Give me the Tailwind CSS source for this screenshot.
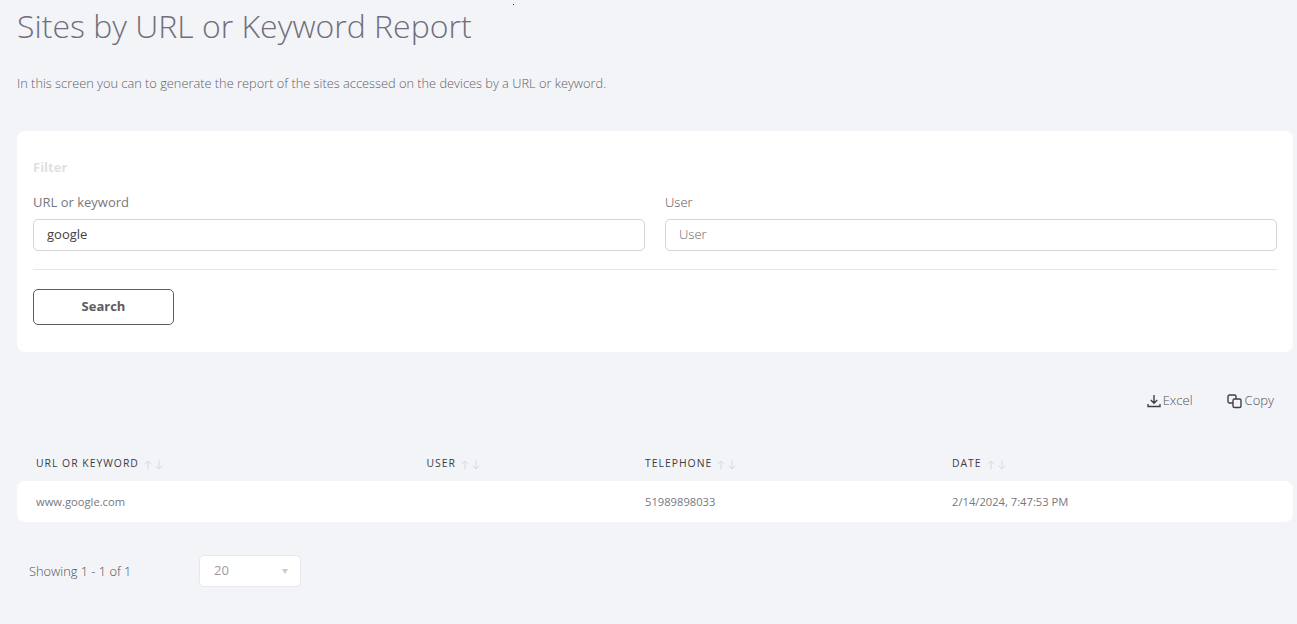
<!DOCTYPE html>
<html lang="en">

<head>
    <meta charset="UTF-8" />
    <title>Sites by URL or Keyword Report</title>
    <script src="https://cdn.jsdelivr.net/npm/@tailwindcss/browser@4"></script>
</head>

<body class="bg-[#f3f4f8] font-['Open_Sans',sans-serif] h-[624px] overflow-hidden relative">
    <div class="absolute left-[513px] top-[4px] w-px h-px bg-[#333]"></div>
    <main class="pl-[17px] pr-[4px]">
        <h1 class="text-[32px] leading-[44px] font-light text-[#6f6f7b] pt-[4px]">Sites by URL or Keyword Report</h1>
        <p class="mt-[25px] mb-[38px] text-[12.8px] leading-[20px] font-light text-[#5f5f68]">In this screen you can to generate the report of the sites accessed on the devices by a URL or keyword.</p>

        <section class="h-[221px] bg-white rounded-[8px] px-[16px] pt-[28px]">
            <h2 class="text-[13px] leading-[16px] font-bold text-[#dfdfe4]">Filter</h2>
            <div class="mt-[17px] grid grid-cols-2 gap-[20px]">
                <div>
                    <label class="block text-[13px] leading-[20px] text-[#77777f]">URL or keyword</label>
                    <input type="text" value="google" class="mt-[7px] block w-full h-[32px] px-[13px] pb-[2px] border border-[#d5d5d8] rounded-[5px] text-[13px] text-[#3f3f46] outline-none" />
                </div>
                <div>
                    <label class="block text-[13px] leading-[20px] font-light text-[#4f4f58]">User</label>
                    <input type="text" placeholder="User" class="mt-[7px] block w-full h-[32px] px-[13px] pb-[2px] border border-[#d5d5d8] rounded-[5px] text-[13px] font-light outline-none placeholder:text-[#66666e]" />
                </div>
            </div>
            <div class="mt-[18px] border-t border-[#e6e6e8]"></div>
            <button class="mt-[19px] block w-[141px] h-[36px] border border-[#5c5c60] rounded-[5px] text-[13px] font-bold text-[#5c5c60]">Search</button>
        </section>

        <div class="mt-[39px] flex justify-end items-center gap-[34px] pr-[19px] h-[20px] text-[13px] font-light text-[#4f4f58]">
            <span class="flex items-center gap-[2px]">
                <svg class="w-[14px] h-[14px]" viewBox="0 0 14 14" fill="none" stroke="#3f3f46" stroke-width="1.4">
                    <path d="M7 1v8M3.8 6 7 9.2 10.2 6M1 10v2.500h12V10" />
                </svg>
                Excel
            </span>
            <span class="flex items-center gap-[2px]">
                <svg class="w-[16px] h-[15px]" viewBox="0 0 16 15" fill="none" stroke="#3f3f46" stroke-width="1.4">
                    <rect x="1" y="1" width="8" height="8" rx="1.5" />
                    <rect x="6" y="5" width="8" height="8.5" rx="1.5" fill="#f3f4f8" />
                </svg>
                Copy
            </span>
        </div>

        <div class="mt-[42px] grid grid-cols-[390.5px_218.5px_307px_1fr] px-[19px] h-[28px] text-[10.4px] tracking-[1px] text-[#3c3c46]">
            <span class="flex items-start pt-[3px] gap-[4px]">URL OR KEYWORD <svg class="w-[22px] h-[10px] mt-[4px]" viewBox="0 0 22 10" fill="none" stroke="#d8d8de"><path d="M5 9.500V1M1.800 4.200 5 1l3.200 3.200M16 .5V9M12.800 5.800 16 9l3.200-3.200" /></svg></span>
            <span class="flex items-start pt-[3px] gap-[4px]">USER <svg class="w-[22px] h-[10px] mt-[4px]" viewBox="0 0 22 10" fill="none" stroke="#d8d8de"><path d="M5 9.500V1M1.800 4.200 5 1l3.200 3.200M16 .5V9M12.800 5.800 16 9l3.200-3.200" /></svg></span>
            <span class="flex items-start pt-[3px] gap-[4px]">TELEPHONE <svg class="w-[22px] h-[10px] mt-[4px]" viewBox="0 0 22 10" fill="none" stroke="#d8d8de"><path d="M5 9.500V1M1.800 4.200 5 1l3.200 3.200M16 .5V9M12.800 5.800 16 9l3.200-3.200" /></svg></span>
            <span class="flex items-start pt-[3px] gap-[4px]">DATE <svg class="w-[22px] h-[10px] mt-[4px]" viewBox="0 0 22 10" fill="none" stroke="#d8d8de"><path d="M5 9.500V1M1.800 4.200 5 1l3.200 3.200M16 .5V9M12.800 5.800 16 9l3.200-3.200" /></svg></span>
        </div>
        <div class="grid grid-cols-[390.5px_218.5px_307px_1fr] items-center px-[19px] pt-[1px] h-[41px] bg-white rounded-[8px] text-[11.2px] text-[#77777f]">
            <span>www.google.com</span>
            <span></span>
            <span>51989898033</span>
            <span>2/14/2024, 7:47:53 PM</span>
        </div>

        <div class="mt-[33px] flex items-center pl-[12px]">
            <span class="w-[170px] pt-[1px] text-[12.8px] font-light text-[#4f4f58]">Showing 1 - 1 of 1</span>
            <div class="w-[102px] h-[32px] bg-white border border-[#e8e8ec] rounded-[5px] flex items-center justify-between pl-[14px] pr-[12px] text-[13px] text-[#9a9aa2]">
                20
                <span class="w-0 h-0 border-x-[3.5px] border-x-transparent border-t-[5px] border-t-[#c8c8ce]"></span>
            </div>
        </div>
    </main>
</body>

</html>
